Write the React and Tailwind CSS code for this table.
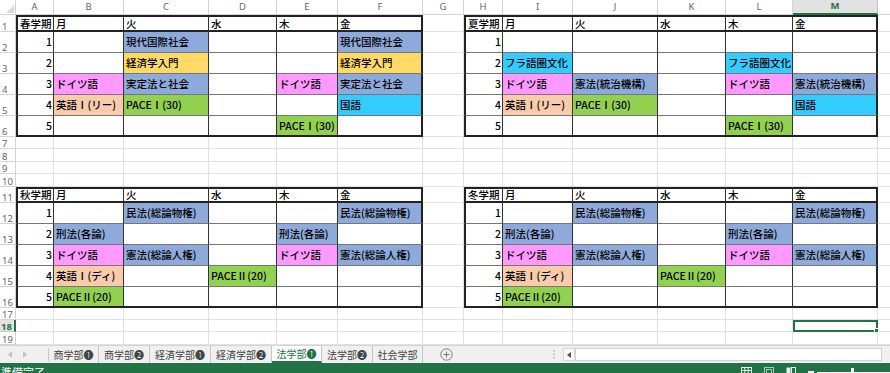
import React from "react";

const COLS =
  "grid-cols-[16px_38px_70px_85px_68px_61px_85px_41px_39px_70px_85px_68px_67px_85px_1fr]";
const ROWS =
  "grid-rows-[15px_17px_21px_21px_21px_21px_21px_12px_13px_12px_13px_16px_21px_21px_21px_21px_21px_12px_12px_13px]";

const LETTERS = ["A", "B", "C", "D", "E", "F", "G", "H", "I", "J", "K", "L", "M"];
const DAYS = ["月", "火", "水", "木", "金"];

const BG = {
  b: "bg-[#8eaadb]",
  y: "bg-[#ffd966]",
  p: "bg-[#ff99ff]",
  o: "bg-[#f8cbad]",
  g: "bg-[#92d050]",
  c: "bg-[#33ccff]",
};

const spring = [
  [null, ["現代国際社会", "b"], null, null, ["現代国際社会", "b"]],
  [null, ["経済学入門", "y"], null, null, ["経済学入門", "y"]],
  [["ドイツ語", "p"], ["実定法と社会", "b"], null, ["ドイツ語", "p"], ["実定法と社会", "b"]],
  [["英語Ⅰ(リー)", "o"], ["PACEⅠ(30)", "g"], null, null, ["国語", "c"]],
  [null, null, null, ["PACEⅠ(30)", "g"], null],
];

const summer = [
  [null, null, null, null, null],
  [["フラ語圏文化", "c"], null, null, ["フラ語圏文化", "c"], null],
  [["ドイツ語", "p"], ["憲法(統治機構)", "b"], null, ["ドイツ語", "p"], ["憲法(統治機構)", "b"]],
  [["英語Ⅰ(リー)", "o"], ["PACEⅠ(30)", "g"], null, null, ["国語", "c"]],
  [null, null, null, ["PACEⅠ(30)", "g"], null],
];

// 秋学期と冬学期は同じ時間割
const autumn = [
  [null, ["民法(総論物権)", "b"], null, null, ["民法(総論物権)", "b"]],
  [["刑法(各論)", "b"], null, null, ["刑法(各論)", "b"], null],
  [["ドイツ語", "p"], ["憲法(総論人権)", "b"], null, ["ドイツ語", "p"], ["憲法(総論人権)", "b"]],
  [["英語Ⅰ(ディ)", "o"], null, ["PACEⅡ(20)", "g"], null, null],
  [["PACEⅡ(20)", "g"], null, null, null, null],
];

// 19 sheet rows x 13 columns
const grid = Array.from({ length: 19 }, () => Array(13).fill(null));

function place(r0, c0, title, rows) {
  for (let i = 0; i < 6; i++) {
    for (let j = 0; j < 6; j++) {
      const cell = {
        top: i === 0,
        bottom: i === 5,
        left: j === 0,
        right: j === 5,
        head: i === 0,
      };
      if (i === 0) cell.text = j === 0 ? title : DAYS[j - 1];
      else if (j === 0) {
        cell.text = String(i);
        cell.num = true;
      } else {
        const e = rows[i - 1][j - 1];
        if (e) {
          cell.text = e[0];
          cell.bg = e[1];
        }
      }
      grid[r0 + i][c0 + j] = cell;
    }
  }
}

place(0, 0, "春学期", spring);
place(0, 7, "夏学期", summer);
place(10, 0, "秋学期", autumn);
place(10, 7, "冬学期", autumn);

function TableCell({ cell }) {
  return (
    <div
      className={[
        "flex items-center overflow-hidden whitespace-nowrap text-[10.5px] font-medium leading-none text-black pt-[1px]",
        cell.top ? "border-t-2 border-t-[#222]" : "",
        cell.left ? "border-l-2 border-l-[#222]" : "",
        cell.right ? "border-r-2 border-r-[#222]" : "border-r border-r-[#333]",
        cell.bottom || cell.head ? "border-b-2 border-b-[#222]" : "border-b border-b-[#777]",
        cell.num ? "justify-end pr-[1px]" : "pl-[2px]",
        cell.bg ? BG[cell.bg] : "bg-white",
      ].join(" ")}
    >
      {cell.text}
    </div>
  );
}

function Corner() {
  return (
    <div className="flex items-end justify-end border-r border-b border-[#d4d4d4] bg-white pr-[1px] pb-[1px]">
      <svg width="8" height="8" viewBox="0 0 8 8">
        <path d="M8 0 L8 8 L0 8 Z" fill="#dadada" />
      </svg>
    </div>
  );
}

function Sheet() {
  const cells = [<Corner key="corner" />];
  LETTERS.forEach((l) => {
    const sel = l === "M";
    cells.push(
      <div
        key={"h" + l}
        className={
          sel
            ? "flex items-center justify-center text-[9.5px] font-['Noto_Sans',sans-serif] bg-[#e1e1e1] text-[#217346] font-bold border-r border-r-[#c6c6c6] border-b-2 border-b-[#217346]"
            : "flex items-center justify-center text-[9.5px] font-['Noto_Sans',sans-serif] bg-white text-[#666] border-r border-b border-[#d4d4d4]"
        }
      >
        {l}
      </div>
    );
  });
  cells.push(<div key="hf" className="border-b border-[#d4d4d4] bg-white" />);

  for (let r = 0; r < 19; r++) {
    const selRow = r === 17;
    cells.push(
      <div
        key={"r" + r}
        className={
          selRow
            ? "flex items-end pl-[1px] text-[9.5px] leading-none font-['Noto_Sans',sans-serif] bg-[#e1e1e1] text-[#217346] font-bold border-b border-b-[#c6c6c6] border-r-2 border-r-[#217346]"
            : "flex items-end pl-[2px] text-[9.5px] leading-none font-['Noto_Sans',sans-serif] bg-white text-[#666] border-r border-b border-[#d4d4d4]"
        }
      >
        {r + 1}
      </div>
    );
    for (let c = 0; c < 13; c++) {
      const cell = grid[r][c];
      if (cell) {
        cells.push(<TableCell key={r + "-" + c} cell={cell} />);
      } else if (selRow && c === 12) {
        cells.push(
          <div key={r + "-" + c} className="relative border-2 border-[#217346]">
            <span className="absolute -right-[3px] -bottom-[3px] w-[5px] h-[5px] bg-[#217346] border border-white" />
          </div>
        );
      } else {
        cells.push(<div key={r + "-" + c} className="border-r border-b border-[#e1e1e1]" />);
      }
    }
    cells.push(<div key={"f" + r} className="border-b border-[#e1e1e1]" />);
  }

  return <div className={`grid ${COLS} ${ROWS} shrink-0 bg-white`}>{cells}</div>;
}

const TABS = [
  { label: "商学部❶", w: "w-[50px]" },
  { label: "商学部❷", w: "w-[51px]" },
  { label: "経済学部❶", w: "w-[61px]" },
  { label: "経済学部❷", w: "w-[61px]" },
  { label: "法学部❶", w: "w-[50px]", active: true },
  { label: "法学部❷", w: "w-[51px]" },
  { label: "社会学部", w: "w-[50px]" },
];

function Tabs() {
  return (
    <div className="flex h-[18px] shrink-0 items-stretch bg-[#f0f0f0] border-t border-[#d4d4d4] text-[10px] leading-none">
      <div className="w-[48px] flex items-center gap-[9px] pl-[8px]">
        <svg width="5" height="7" viewBox="0 0 5 7">
          <path d="M4 0 L0 3.5 L4 7 Z" fill="#c2c2c2" />
        </svg>
        <svg width="5" height="7" viewBox="0 0 5 7">
          <path d="M1 0 L5 3.5 L1 7 Z" fill="#c2c2c2" />
        </svg>
      </div>
      <div className="w-px bg-[#c6c6c6] my-[2px]" />
      {TABS.map((t) => (
        <div
          key={t.label}
          className={
            t.active
              ? `${t.w} flex items-center justify-center bg-white text-[#217346] border-r border-r-[#c6c6c6] border-b-2 border-b-[#217346]`
              : `${t.w} flex items-center justify-center text-[#444] border-r border-[#c6c6c6]`
          }
        >
          {t.label}
        </div>
      ))}
      <div className="w-[46px] flex items-center justify-center">
        <svg width="13" height="13" viewBox="0 0 13 13">
          <circle cx="6.5" cy="6.5" r="5.7" fill="none" stroke="#7a7a7a" strokeWidth="1" />
          <path d="M6.5 3.5 V9.5 M3.5 6.5 H9.5" stroke="#7a7a7a" strokeWidth="1" />
        </svg>
      </div>
      <div className="flex-1" />
      <div className="w-[10px] flex items-center justify-center">
        <svg width="2" height="9" viewBox="0 0 2 9">
          <circle cx="1" cy="1" r="0.8" fill="#a0a0a0" />
          <circle cx="1" cy="4.5" r="0.8" fill="#a0a0a0" />
          <circle cx="1" cy="8" r="0.8" fill="#a0a0a0" />
        </svg>
      </div>
      <div className="w-[4px]" />
      <div className="w-[12px] my-[2px] flex items-center justify-center bg-[#f8f8f8] border border-[#d8d8d8]">
        <svg width="4" height="6" viewBox="0 0 4 6">
          <path d="M4 0 L0 3 L4 6 Z" fill="#505050" />
        </svg>
      </div>
      <div className="w-[307px] my-[2px] bg-white border border-[#d0d0d0]" />
      <div className="w-[8px]" />
    </div>
  );
}

function StatusBar() {
  return (
    <div className="flex h-[24px] shrink-0 bg-[#217346] text-white">
      <div className="pl-[1px] pt-[4px] text-[11px] leading-none">準備完了</div>
      <div className="flex-1" />
      <div className="flex items-start pt-[4px] gap-[12px]">
        <svg width="11" height="10" viewBox="0 0 11 10">
          <rect x="0.5" y="0.5" width="10" height="9" fill="none" stroke="#e8f0ea" />
          <path d="M0.5 3.5 H10.5 M0.5 6.5 H10.5 M3.8 0.5 V9.5 M7.2 0.5 V9.5" stroke="#e8f0ea" />
        </svg>
        <svg width="10" height="10" viewBox="0 0 10 10">
          <rect x="0.5" y="0.5" width="9" height="9" fill="none" stroke="#a9c7b3" />
          <rect x="2.5" y="2.5" width="5" height="7" fill="none" stroke="#a9c7b3" />
        </svg>
        <svg width="10" height="10" viewBox="0 0 10 10">
          <rect x="0.5" y="0.5" width="4" height="9" fill="#e8f0ea" />
          <rect x="5.5" y="0.5" width="4" height="9" fill="none" stroke="#e8f0ea" />
        </svg>
        <div className="flex items-center h-[10px] w-[82px]">
          <div className="w-[6px] h-[2px] bg-white" />
          <div className="w-[34px] h-px bg-white ml-[3px]" />
          <div className="w-[3px] h-[9px] bg-white" />
          <div className="flex-1 h-px bg-white" />
        </div>
      </div>
    </div>
  );
}

export default function App() {
  return (
    <div className="w-[890px] h-[373px] overflow-hidden bg-white font-['Noto_Sans_CJK_JP',sans-serif] flex flex-col">
      <Sheet />
      <Tabs />
      <StatusBar />
    </div>
  );
}
